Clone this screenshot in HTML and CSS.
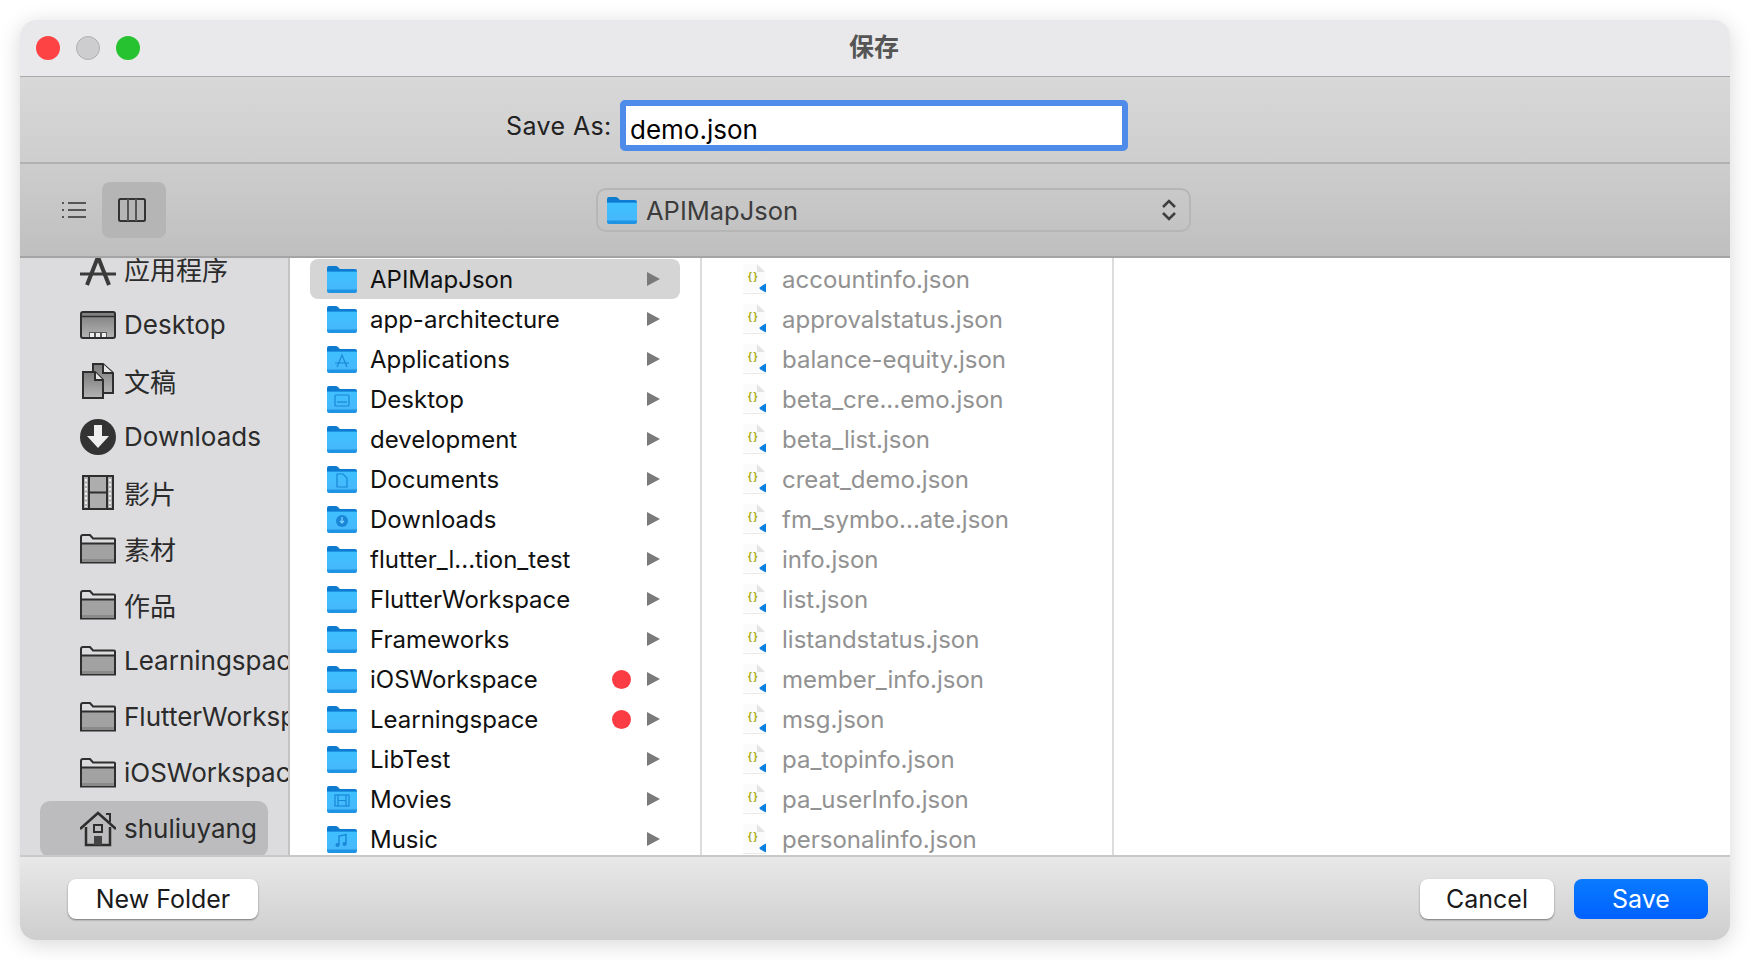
FILE: index.html
```html
<!DOCTYPE html>
<html lang="zh">

<head>
    <meta charset="UTF-8">
    <title>保存</title>
    <link rel="stylesheet" href="styles.css">
</head>

<body>
    <svg class="defs" width="0" height="0">
        <defs>
            <linearGradient id="folderBody" x1="0" y1="0" x2="0" y2="1">
                <stop offset="0" stop-color="#3fc0ff" />
                <stop offset="1" stop-color="#45b8fb" />
            </linearGradient>
            <linearGradient id="greyFill" x1="0" y1="0" x2="0" y2="1">
                <stop offset="0" stop-color="#7c7c7c" />
                <stop offset="1" stop-color="#b4b4b4" />
            </linearGradient>
            <symbol id="folder" viewBox="0 0 30 27">
                <path d="M0 2q0-2 2-2h7q1.500 0 2.500 1.500L13 3h15q2 0 2 2v3H0z" fill="#0d7bd0" />
                <path d="M0 5h30v20q0 2-2 2H2q-2 0-2-2z" fill="#1f94e4" />
                <path d="M0 6h30v17.500H0z" fill="url(#folderBody)" />
            </symbol>
            <symbol id="doc-json" viewBox="0 0 24 30">
                <path d="M0 0h14l8 8v20H0z" fill="#fbfbfb" />
                <path d="M14 0v8h8z" fill="#e4e4e4" />
                <path d="M0 29.500h22" stroke="#e9e9e9" />
                <text x="10.500" y="16" text-anchor="middle" font-family="Liberation Sans" font-size="10" font-weight="700" letter-spacing="1.500" fill="#a8ac10">{}</text>
                <path d="M16 24l4-3 3-1.500v9l-3-1.500-4-3zM17 23l2 1.500-2 1.500z" fill="#0a7fe0" />
            </symbol>
            <symbol id="sb-folder" viewBox="0 0 36 30">
                <path d="M1 28.500V3q0-2 2-2h7l3 3.500h21q1 0 1 1v23z" fill="#dcdcde" stroke="#2e2e2e" stroke-width="2" />
                <path d="M2 10h32v18H2z" fill="#a2a2a2" />
                <path d="M2 25h32v3H2z" fill="#8a8a8a" />
                <path d="M1 9.500h34" stroke="#2e2e2e" stroke-width="2" />
            </symbol>
        </defs>
    </svg>

    <div class="dialog">
        <header class="titlebar">
            <div class="lights">
                <span class="light red"></span>
                <span class="light grey"></span>
                <span class="light green"></span>
            </div>
            <div class="title">保存</div>
        </header>

        <div class="saveas">
            <label class="saveas-label">Save As:</label>
            <div class="name-input">demo.json</div>
        </div>

        <div class="toolbar">
            <div class="views">
                <button class="view-btn list">
                    <svg width="24" height="18" viewBox="0 0 24 18">
                        <path d="M6 2h18M6 9h18M6 16h18" stroke="#555" stroke-width="2" />
                        <path d="M0 2h2M0 9h2M0 16h2" stroke="#555" stroke-width="2" />
                    </svg>
                </button>
                <button class="view-btn active">
                    <svg width="28" height="24" viewBox="0 0 28 24">
                        <rect x="1" y="1" width="26" height="22" rx="1.500" fill="none" stroke="#333" stroke-width="2" />
                        <path d="M10 1v22M18 1v22" stroke="#555" stroke-width="2" />
                    </svg>
                </button>
            </div>
            <div class="path-popup">
                <svg class="popup-folder" width="30" height="27"><use href="#folder" /></svg>
                <span class="popup-name">APIMapJson</span>
                <svg class="popup-arrows" width="16" height="24" viewBox="0 0 16 24">
                    <path d="M2 9l6-6 6 6M2 15l6 6 6-6" fill="none" stroke="#3f3f3f" stroke-width="2.500" />
                </svg>
            </div>
        </div>

        <div class="browser">
            <nav class="sidebar">
                <ul class="side-list">
                    <li class="side-item">
                        <svg class="side-icon" viewBox="0 0 36 36">
                            <path d="M7 34L18 6M29 34L18 6" stroke="#3a3a3a" stroke-width="4" />
                            <path d="M0 23h36" stroke="#3a3a3a" stroke-width="3" />
                        </svg>
                        <span>应用程序</span>
                    </li>
                    <li class="side-item">
                        <svg class="side-icon" viewBox="0 0 36 36">
                            <rect x="1" y="5" width="34" height="26" rx="2" fill="url(#greyFill)" stroke="#2e2e2e" stroke-width="2" />
                            <path d="M2 9.500h32" stroke="#2e2e2e" stroke-width="1.500" />
                            <path d="M9 30v-5h18v5z" fill="#555" />
                            <path d="M10 26h4v4h-4zM16 26h4v4h-4zM22 26h4v4h-4z" fill="#eee" />
                        </svg>
                        <span>Desktop</span>
                    </li>
                    <li class="side-item">
                        <svg class="side-icon" viewBox="0 0 36 36">
                            <path d="M13 1h10l10 9v20H13z" fill="url(#greyFill)" stroke="#2e2e2e" stroke-width="2" />
                            <path d="M3 9h12l8 8v18H3z" fill="url(#greyFill)" stroke="#2e2e2e" stroke-width="2" />
                            <path d="M15 9v8h8M23 1v9h10" fill="#e6e6e6" stroke="#2e2e2e" stroke-width="2" />
                        </svg>
                        <span>文稿</span>
                    </li>
                    <li class="side-item">
                        <svg class="side-icon" viewBox="0 0 36 36">
                            <circle cx="18" cy="18" r="18" fill="#333" />
                            <path d="M14 6h8v11h7L18 29 7 17h7z" fill="#eee" />
                        </svg>
                        <span>Downloads</span>
                    </li>
                    <li class="side-item">
                        <svg class="side-icon" viewBox="0 0 36 36">
                            <rect x="3" y="1" width="30" height="33" fill="#adadad" stroke="#2e2e2e" stroke-width="2" />
                            <path d="M9 1v33M27 1v33M9 17.500h18" stroke="#2e2e2e" stroke-width="2" />
                            <path d="M6 4v28M30 4v28" stroke="#eee" stroke-width="2" stroke-dasharray="2.500 2" />
                        </svg>
                        <span>影片</span>
                    </li>
                    <li class="side-item">
                        <svg class="side-icon"><use href="#sb-folder" /></svg>
                        <span>素材</span>
                    </li>
                    <li class="side-item">
                        <svg class="side-icon"><use href="#sb-folder" /></svg>
                        <span>作品</span>
                    </li>
                    <li class="side-item">
                        <svg class="side-icon"><use href="#sb-folder" /></svg>
                        <span>Learningspace</span>
                    </li>
                    <li class="side-item">
                        <svg class="side-icon"><use href="#sb-folder" /></svg>
                        <span>FlutterWorkspace</span>
                    </li>
                    <li class="side-item">
                        <svg class="side-icon"><use href="#sb-folder" /></svg>
                        <span>iOSWorkspace</span>
                    </li>
                    <li class="side-item selected">
                        <svg class="side-icon" viewBox="0 0 36 36">
                            <path d="M6 16v18h24V16" fill="none" stroke="#2e2e2e" stroke-width="2.500" />
                            <path d="M0 18L18 2l18 16" fill="none" stroke="#2e2e2e" stroke-width="2.500" />
                            <path d="M26 3h4v8" fill="none" stroke="#2e2e2e" stroke-width="2" />
                            <path d="M14 14h8v7h-8z" fill="none" stroke="#2e2e2e" stroke-width="2" />
                            <path d="M14 25h8v9h-8z" fill="#444" />
                        </svg>
                        <span>shuliuyang</span>
                    </li>
                </ul>
            </nav>

            <div class="column">
                <div class="row selected">
                    <svg class="folder" width="30" height="27"><use href="#folder" /></svg>
                    <span class="row-name">APIMapJson</span>
                    <i class="arrow"></i>
                </div>
                <div class="row">
                    <svg class="folder" width="30" height="27"><use href="#folder" /></svg>
                    <span class="row-name">app-architecture</span>
                    <i class="arrow"></i>
                </div>
                <div class="row">
                    <svg class="folder" width="30" height="27" viewBox="0 0 30 27">
                        <use href="#folder" width="30" height="27" />
                        <path d="M10 21L15 9l5 12M8 17h14" fill="none" stroke="#1a86d8" stroke-width="1.200" />
                    </svg>
                    <span class="row-name">Applications</span>
                    <i class="arrow"></i>
                </div>
                <div class="row">
                    <svg class="folder" width="30" height="27" viewBox="0 0 30 27">
                        <use href="#folder" width="30" height="27" />
                        <rect x="8" y="9" width="14" height="11" rx="1" fill="none" stroke="#1a86d8" stroke-width="1.200" />
                        <path d="M10 16h10" stroke="#1a86d8" stroke-width="1.200" />
                    </svg>
                    <span class="row-name">Desktop</span>
                    <i class="arrow"></i>
                </div>
                <div class="row">
                    <svg class="folder" width="30" height="27"><use href="#folder" /></svg>
                    <span class="row-name">development</span>
                    <i class="arrow"></i>
                </div>
                <div class="row">
                    <svg class="folder" width="30" height="27" viewBox="0 0 30 27">
                        <use href="#folder" width="30" height="27" />
                        <path d="M10 8h6l4 4v9H10z" fill="none" stroke="#1a86d8" stroke-width="1.200" />
                    </svg>
                    <span class="row-name">Documents</span>
                    <i class="arrow"></i>
                </div>
                <div class="row">
                    <svg class="folder" width="30" height="27" viewBox="0 0 30 27">
                        <use href="#folder" width="30" height="27" />
                        <circle cx="15" cy="15" r="6" fill="#1a86d8" />
                        <path d="M15 11v6M13 15l2 2 2-2" fill="none" stroke="#7fd4ff" stroke-width="1.200" />
                    </svg>
                    <span class="row-name">Downloads</span>
                    <i class="arrow"></i>
                </div>
                <div class="row">
                    <svg class="folder" width="30" height="27"><use href="#folder" /></svg>
                    <span class="row-name">flutter_l...tion_test</span>
                    <i class="arrow"></i>
                </div>
                <div class="row">
                    <svg class="folder" width="30" height="27"><use href="#folder" /></svg>
                    <span class="row-name">FlutterWorkspace</span>
                    <i class="arrow"></i>
                </div>
                <div class="row">
                    <svg class="folder" width="30" height="27"><use href="#folder" /></svg>
                    <span class="row-name">Frameworks</span>
                    <i class="arrow"></i>
                </div>
                <div class="row">
                    <svg class="folder" width="30" height="27"><use href="#folder" /></svg>
                    <span class="row-name">iOSWorkspace</span>
                    <i class="tag"></i>
                    <i class="arrow"></i>
                </div>
                <div class="row">
                    <svg class="folder" width="30" height="27"><use href="#folder" /></svg>
                    <span class="row-name">Learningspace</span>
                    <i class="tag"></i>
                    <i class="arrow"></i>
                </div>
                <div class="row">
                    <svg class="folder" width="30" height="27"><use href="#folder" /></svg>
                    <span class="row-name">LibTest</span>
                    <i class="arrow"></i>
                </div>
                <div class="row">
                    <svg class="folder" width="30" height="27" viewBox="0 0 30 27">
                        <use href="#folder" width="30" height="27" />
                        <rect x="8" y="9" width="14" height="11" fill="none" stroke="#1a86d8" stroke-width="1.200" />
                        <path d="M11 9v11M19 9v11M11 14.500h8" stroke="#1a86d8" stroke-width="1.200" />
                    </svg>
                    <span class="row-name">Movies</span>
                    <i class="arrow"></i>
                </div>
                <div class="row">
                    <svg class="folder" width="30" height="27" viewBox="0 0 30 27">
                        <use href="#folder" width="30" height="27" />
                        <path d="M12 19V10l7-1.500V18" fill="none" stroke="#1a86d8" stroke-width="1.400" />
                        <circle cx="10.500" cy="19" r="2" fill="#1a86d8" />
                        <circle cx="17.500" cy="18" r="2" fill="#1a86d8" />
                    </svg>
                    <span class="row-name">Music</span>
                    <i class="arrow"></i>
                </div>
            </div>

            <div class="column files">
                <div class="row file"><svg class="doc" width="24" height="30"><use href="#doc-json" /></svg><span class="row-name">accountinfo.json</span></div>
                <div class="row file"><svg class="doc" width="24" height="30"><use href="#doc-json" /></svg><span class="row-name">approvalstatus.json</span></div>
                <div class="row file"><svg class="doc" width="24" height="30"><use href="#doc-json" /></svg><span class="row-name">balance-equity.json</span></div>
                <div class="row file"><svg class="doc" width="24" height="30"><use href="#doc-json" /></svg><span class="row-name">beta_cre...emo.json</span></div>
                <div class="row file"><svg class="doc" width="24" height="30"><use href="#doc-json" /></svg><span class="row-name">beta_list.json</span></div>
                <div class="row file"><svg class="doc" width="24" height="30"><use href="#doc-json" /></svg><span class="row-name">creat_demo.json</span></div>
                <div class="row file"><svg class="doc" width="24" height="30"><use href="#doc-json" /></svg><span class="row-name">fm_symbo...ate.json</span></div>
                <div class="row file"><svg class="doc" width="24" height="30"><use href="#doc-json" /></svg><span class="row-name">info.json</span></div>
                <div class="row file"><svg class="doc" width="24" height="30"><use href="#doc-json" /></svg><span class="row-name">list.json</span></div>
                <div class="row file"><svg class="doc" width="24" height="30"><use href="#doc-json" /></svg><span class="row-name">listandstatus.json</span></div>
                <div class="row file"><svg class="doc" width="24" height="30"><use href="#doc-json" /></svg><span class="row-name">member_info.json</span></div>
                <div class="row file"><svg class="doc" width="24" height="30"><use href="#doc-json" /></svg><span class="row-name">msg.json</span></div>
                <div class="row file"><svg class="doc" width="24" height="30"><use href="#doc-json" /></svg><span class="row-name">pa_topinfo.json</span></div>
                <div class="row file"><svg class="doc" width="24" height="30"><use href="#doc-json" /></svg><span class="row-name">pa_userInfo.json</span></div>
                <div class="row file"><svg class="doc" width="24" height="30"><use href="#doc-json" /></svg><span class="row-name">personalinfo.json</span></div>
            </div>

            <div class="empty-col"></div>
        </div>

        <footer class="footer">
            <button class="btn">New Folder</button>
            <div class="footer-right">
                <button class="btn small">Cancel</button>
                <button class="btn small primary">Save</button>
            </div>
        </footer>
    </div>
</body>

</html>
```

FILE: styles.css
```css
* {
    box-sizing: border-box;
}

html,
body {
    margin: 0;
    height: 100%;
    background-color: #fff;
}

body {
    padding: 20px;
    overflow: hidden;
    font-family: Inter, "Noto Sans CJK SC", sans-serif;
    font-size: 24px;
    color: #111;
}

.defs {
    position: absolute;
}

.dialog {
    width: 1710px;
    height: 920px;
    display: flex;
    flex-direction: column;
    border-radius: 16px;
    overflow: hidden;
    box-shadow: 0 4px 22px rgba(0, 0, 0, 0.16);
}

.titlebar {
    height: 57px;
    flex: none;
    display: flex;
    align-items: center;
    justify-content: center;
    position: relative;
    padding-bottom: 6px;
    background-color: #e9e9eb;
    border-bottom: 1px solid #a9a9a9;
}

.lights {
    position: absolute;
    left: 16px;
    top: 16px;
    display: flex;
    gap: 16px;
}

.light {
    width: 24px;
    height: 24px;
    border-radius: 50%;
}

.red {
    background-color: #fd4343;
}

.grey {
    background-color: #cdcdcf;
    border: 1px solid #b0b0b0;
}

.green {
    background-color: #27c22f;
}

.title {
    font-size: 25px;
    font-weight: 700;
    color: #555;
    margin-right: 2px;
}

.saveas {
    height: 87px;
    flex: none;
    display: flex;
    align-items: center;
    padding-left: 486px;
    padding-top: 12px;
    background: linear-gradient(#d8d8d8, #cecece);
    border-bottom: 2px solid #b2b2b2;
}

.saveas-label {
    width: 114px;
    font-size: 25px;
    letter-spacing: 0.4px;
    color: #222;
    margin-top: 1px;
}

.name-input {
    width: 508px;
    height: 51px;
    padding: 4px 4px 0 4px;
    font-size: 26px;
    line-height: 39px;
    color: #000;
    background-color: #fff;
    border: 6px solid #4f8be8;
    border-radius: 5px;
}

.toolbar {
    height: 94px;
    flex: none;
    display: flex;
    align-items: center;
    padding-left: 30px;
    background: linear-gradient(#cdcdcd, #bfbfbf);
    border-bottom: 2px solid #a4a4a4;
}

.views {
    display: flex;
    align-items: center;
    gap: 4px;
    width: 546px;
}

.view-btn {
    width: 64px;
    height: 56px;
    padding: 0;
    border: 0;
    background: none;
    border-radius: 8px;
    display: flex;
    align-items: center;
    justify-content: center;
}

.view-btn.list {
    width: 48px;
}

.view-btn.active {
    padding-right: 4px;
    background-color: #b5b5b5;
}

.path-popup {
    width: 595px;
    height: 44px;
    display: flex;
    align-items: center;
    padding: 0 12px 0 9px;
    border: 2px solid #b6b6b6;
    border-radius: 10px;
    font-size: 25.500px;
    color: #3c3c3c;
}

.popup-name {
    margin-left: 9px;
    flex: 1;
}

.browser {
    flex: 1;
    min-height: 0;
    display: flex;
    background-color: #fff;
    border-bottom: 2px solid #c9c9c9;
}

.sidebar {
    width: 270px;
    flex: none;
    overflow: hidden;
    background-color: #dcdcde;
    border-right: 2px solid #c4c4c4;
}

.side-list {
    list-style: none;
    margin: -17px 0 0;
    padding: 0;
}

.side-item {
    height: 56px;
    margin: 0 20px;
    padding-left: 40px;
    display: flex;
    align-items: center;
    gap: 8px;
    white-space: nowrap;
    font-size: 26px;
    color: #2b2b2b;
    border-radius: 10px;
}

.side-item span {
    padding-bottom: 1px;
}

.side-item.selected {
    width: 228px;
    background-color: #bcbcbe;
}

.side-icon {
    width: 36px;
    height: 36px;
    flex: none;
}

.column {
    width: 412px;
    flex: none;
    overflow: hidden;
    padding: 1px 20px 0;
    border-right: 2px solid #dcdcdc;
}

.row {
    height: 40px;
    display: flex;
    align-items: center;
    padding: 0 20px 0 17px;
    border-radius: 8px;
    white-space: nowrap;
}

.row.selected {
    background-color: #d5d5d5;
}

.folder {
    flex: none;
    margin-right: 13px;
}

.row-name {
    flex: 1;
}

.arrow {
    width: 0;
    height: 0;
    flex: none;
    border-left: 13px solid #7a7a7a;
    border-top: 7px solid transparent;
    border-bottom: 7px solid transparent;
}

.tag {
    width: 19px;
    height: 19px;
    flex: none;
    margin-right: 16px;
    border-radius: 50%;
    background-color: #fc3c44;
}

.row.file {
    padding-left: 21px;
    color: #929292;
}

.doc {
    flex: none;
    margin-right: 15px;
}

.empty-col {
    flex: 1;
}

.footer {
    height: 83px;
    flex: none;
    display: flex;
    align-items: center;
    justify-content: space-between;
    padding: 0 22px 0 48px;
    background: linear-gradient(#e8e8e8, #cecece);
}

.footer-right {
    display: flex;
    gap: 20px;
}

.btn {
    width: 190px;
    height: 40px;
    padding: 0;
    border: 0;
    border-radius: 8px;
    font-family: inherit;
    font-size: 25px;
    color: #1a1a1a;
    background-color: #fff;
    box-shadow: 0 1px 2px rgba(0, 0, 0, 0.45);
}

.btn.small {
    width: 134px;
}

.btn.primary {
    color: #fff;
    background: linear-gradient(#0a7bff, #0061ff);
    box-shadow: none;
}
```
